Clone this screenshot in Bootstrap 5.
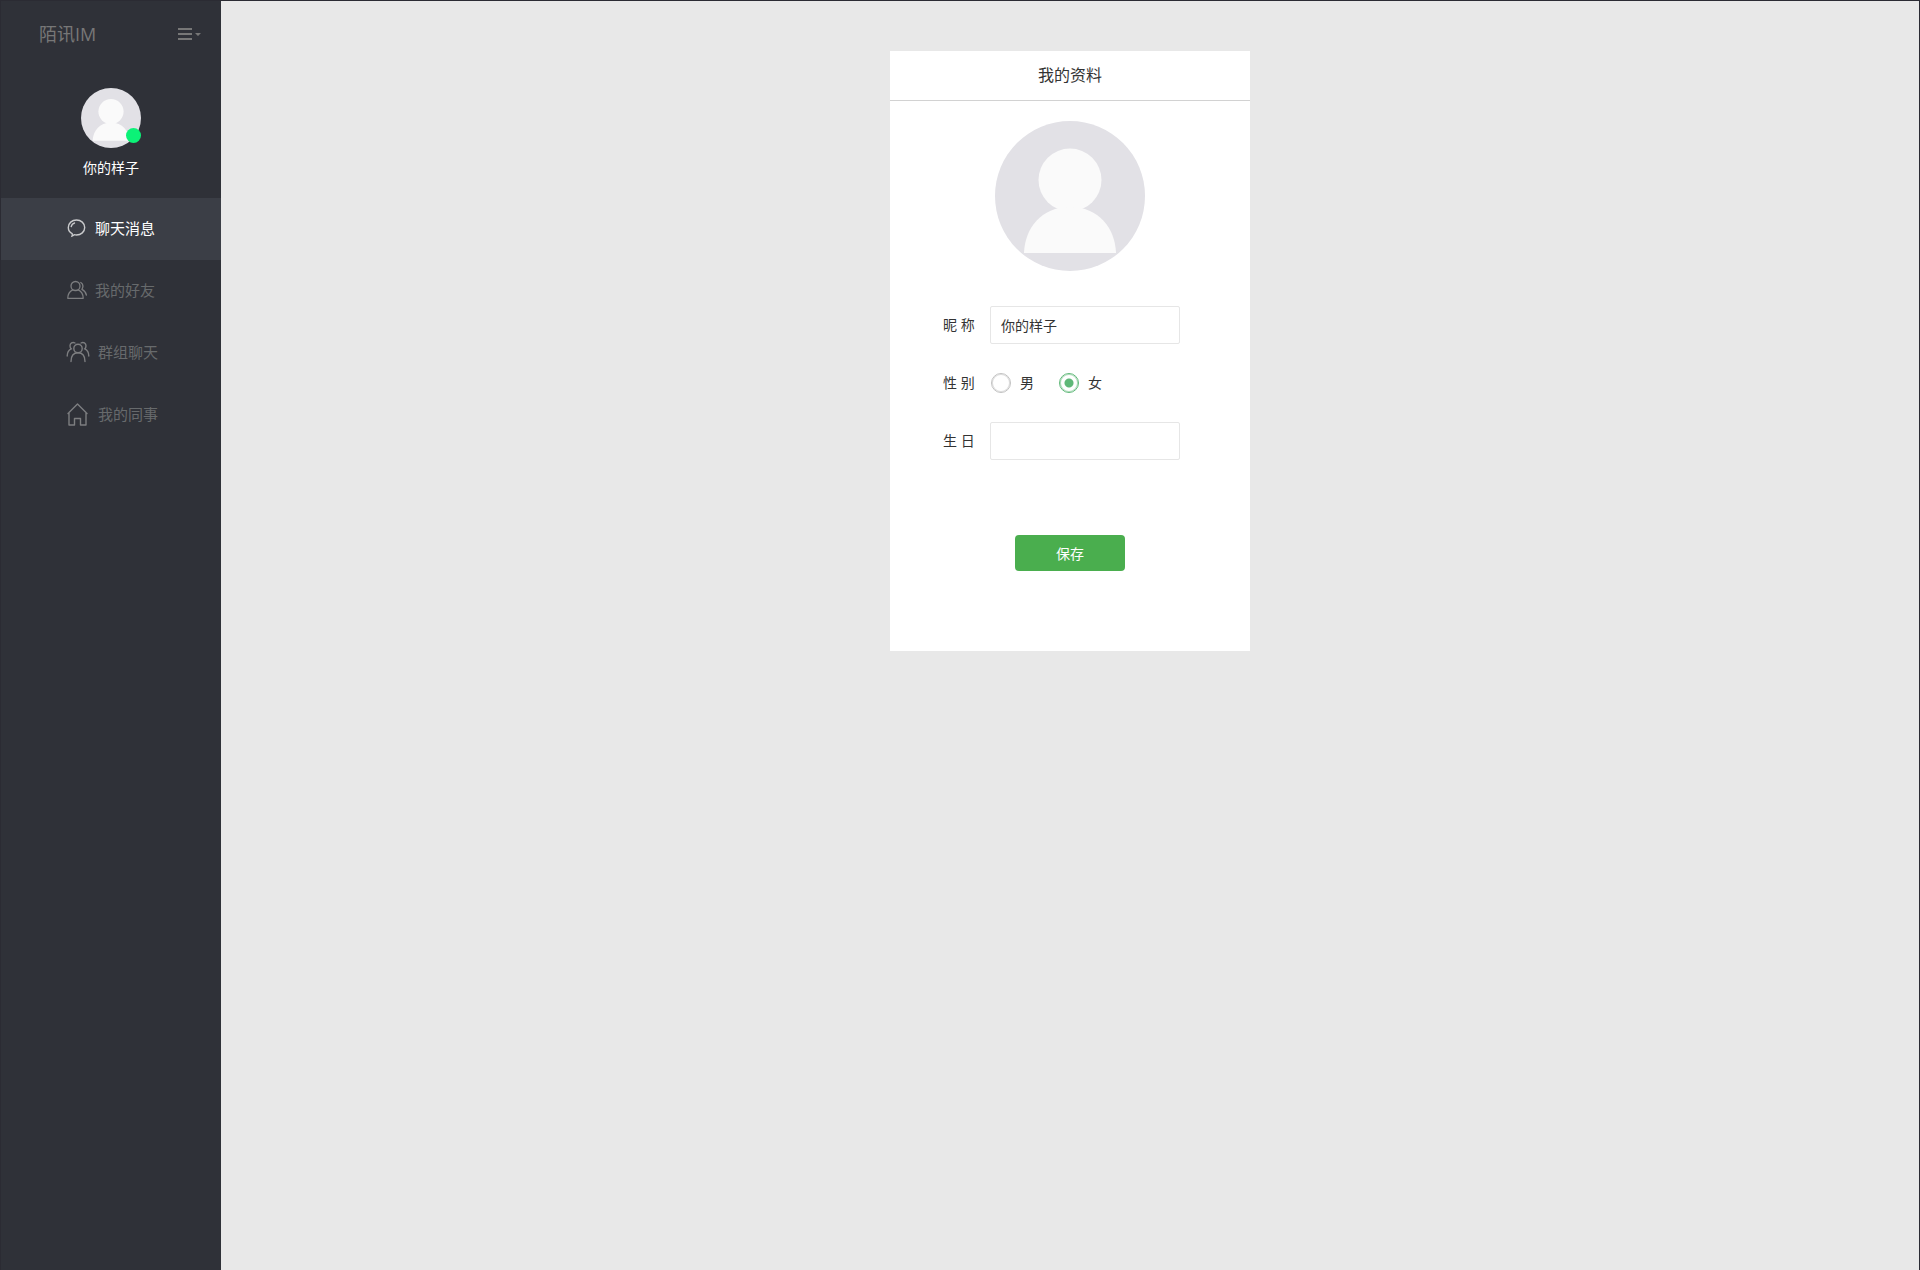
<!DOCTYPE html>
<html lang="zh-CN">
<head>
<meta charset="utf-8">
<meta name="viewport" content="width=device-width, initial-scale=1">
<title>陌讯IM</title>
<link rel="stylesheet" href="https://cdn.jsdelivr.net/npm/bootstrap@5.3.0/dist/css/bootstrap.min.css">
<style>
body { font-family: "Open Sans", "Noto Sans CJK SC", sans-serif; font-size: 14px; line-height: 20px; color: #333; background: #e8e8e8; }
.im-frame { border: 1px solid #2b2b33; border-bottom: 0; }
.im-side { width: 220px; background: #2f3138; }
.im-head { height: 66px; padding: 0 19px 0 38px; }
.im-brand { font-size: 18px; line-height: 24px; color: #777; }
.im-menu { color: #777; }
.im-face { width: 60px; height: 60px; }
.im-online { width: 15px; height: 15px; right: 0; bottom: 5px; background: #0bf277; }
.im-profile { padding: 21px 0 20px; gap: 10px; }
.im-nav .nav-link { height: 62px; gap: 8px; padding: 0 0 2px; font-size: 15px; color: #676a6c; border-radius: 0; }
.im-nav .nav-link svg { color: #7d7e80; }
.im-nav .nav-link.active { background: #3b3e46; color: #fff; }
.im-nav .nav-link.active svg { color: #c9cacc; }
.im-main { padding-top: 50px; }
.im-panel { width: 360px; min-height: 600px; }
.im-title { font-size: 16px; line-height: 24px; padding: 12px 0 13px; border-bottom: 1px solid #d2d2d2; font-weight: 400; color: #333; }
.im-photo { width: 150px; height: 150px; margin: 20px auto 35px; }
.im-form { padding: 0 50px; }
.im-fields { gap: 20px; padding-right: 20px; }
.im-row { min-height: 38px; }
.im-label { width: 50px; padding-left: 3px; white-space: nowrap; }
.im-input { height: 38px; padding: 0 10px; font-size: 14px; color: #333; border-color: #e6e6e6; border-radius: 2px; }
.im-radios { gap: 25px; padding-left: 1px; }
.im-radio { gap: 9px; margin: 0; min-height: 0; padding: 0; }
.im-radio .form-check-input { float: none; width: 20px; height: 20px; margin: 0; border: 1px solid #c2c2c2; box-shadow: inset 0 0 0 1px #ddd; background: #fff; }
.im-radio .form-check-input:checked { border-color: #5fb878; box-shadow: inset 0 0 0 1px #b0dcbc; background: radial-gradient(circle, #5fb878 4px, #fff 5px); }
.im-save { width: 110px; height: 36px; margin-top: 75px; padding: 0; font-size: 14px; background: #4aae4e; color: #fff; border: 0; border-radius: 4px; }
.im-save:hover { background: #409b44; color: #fff; }
</style>
<script src="https://cdn.jsdelivr.net/npm/bootstrap@5.3.0/dist/js/bootstrap.bundle.min.js"></script>
</head>
<body>
<svg width="0" height="0" class="position-absolute" aria-hidden="true">
  <symbol id="person" viewBox="0 0 150 150">
    <circle cx="75" cy="75" r="75" fill="#e2e1e6"/>
    <circle cx="75" cy="59" r="31.5" fill="#fafafa"/>
    <path d="M29 132C30 107 46 86 75 86s45 21 46 46z" fill="#fafafa"/>
  </symbol>
</svg>
<div class="im-frame d-flex min-vh-100">
  <aside class="im-side flex-shrink-0 d-flex flex-column">
    <header class="im-head d-flex align-items-center justify-content-between">
      <a href="#" class="im-brand text-decoration-none">陌讯IM</a>
      <button type="button" class="im-menu btn p-0 border-0 d-flex" aria-label="菜单">
        <svg width="24" height="12" viewBox="0 0 24 12" fill="currentColor"><path d="M0 0h14v2H0zM0 5h14v2H0zM0 10h14v2H0zM17 5h6l-3 3z"/></svg>
      </button>
    </header>
    <div class="im-profile d-flex flex-column align-items-center">
      <div class="im-face position-relative">
        <svg width="60" height="60"><use href="#person"/></svg>
        <span class="im-online position-absolute rounded-circle"></span>
      </div>
      <span class="text-white">你的样子</span>
    </div>
    <nav class="im-nav nav flex-column">
      <a href="#" class="nav-link active d-flex align-items-center justify-content-center">
        <svg width="20" height="20" viewBox="0 0 20 20" fill="none" stroke="currentColor" stroke-width="1.4" stroke-linecap="round"><path d="M5.200 15.700C2.500 14.200 1.300 12 1.300 9.500c0-4.300 3.700-7.500 8.200-7.500s8.200 3.200 8.200 7.500-3.700 7.500-8.200 7.500c-.8 0-1.600-.1-2.300-.3-.5.700-1.200 1.200-2.200 1.500.3-.7.400-1.400.2-2.500z"/><path d="M4.200 8.500C4.600 6.700 5.800 5.500 7.500 5"/></svg>
        聊天消息</a>
      <a href="#" class="nav-link d-flex align-items-center justify-content-center">
        <svg width="20" height="20" viewBox="0 0 20 20" fill="none" stroke="currentColor" stroke-width="1.300" stroke-linecap="round" stroke-linejoin="round"><circle cx="8.500" cy="6" r="4.500"/><path d="M5.800 9.800C2.500 11.200.8 13.600.8 18.300h15.400c0-4.700-1.700-7.100-5-8.500M13.800 2.500c1.800 1.200 2.600 3.300 1.700 5.500l-.6 1.400c2.600 1.200 4 3.100 4.500 5.600"/></svg>
        我的好友</a>
      <a href="#" class="nav-link d-flex align-items-center justify-content-center">
        <svg width="26" height="22" viewBox="0 0 26 22" fill="none" stroke="currentColor" stroke-width="1.400" stroke-linecap="round"><circle cx="14" cy="7.500" r="4.200"/><path d="M7 20.500c0-5.200 2.200-8.800 7-8.800s7 3.600 7 8.800M11 2C8.500.6 6 2.200 6 4.800c0 1.300.4 2.300 1.200 3C4.800 9 3.200 11.500 3.200 15M17 2c2.500-1.400 5 .2 5 2.800 0 1.300-.4 2.300-1.200 3 2.400 1.200 4 3.700 4 7.200"/></svg>
        群组聊天</a>
      <a href="#" class="nav-link d-flex align-items-center justify-content-center">
        <svg width="26" height="24" viewBox="0 0 26 24" fill="none" stroke="currentColor" stroke-width="1.400" stroke-linejoin="round" stroke-linecap="round"><path d="M4 11.500 13.500 2l9.500 9.500M5 10.500v12.500h5.500v-6.500h6V23H22V10.500"/></svg>
        我的同事</a>
    </nav>
  </aside>
  <main class="im-main flex-grow-1">
    <section class="im-panel bg-white mx-auto">
      <h1 class="im-title text-center m-0">我的资料</h1>
      <svg class="im-photo d-block" role="img" aria-label="头像"><use href="#person"/></svg>
      <form class="im-form">
        <div class="im-fields d-flex flex-column">
          <div class="im-row d-flex align-items-center">
            <label for="nick" class="im-label flex-shrink-0">昵 称</label>
            <input id="nick" type="text" class="im-input form-control" value="你的样子">
          </div>
          <div class="im-row d-flex align-items-center" role="radiogroup" aria-labelledby="sex">
            <span id="sex" class="im-label flex-shrink-0">性 别</span>
            <div class="im-radios d-flex">
              <div class="im-radio form-check d-flex align-items-center">
                <input class="form-check-input" type="radio" name="sex" id="male"><label for="male">男</label>
              </div>
              <div class="im-radio form-check d-flex align-items-center">
                <input class="form-check-input" type="radio" name="sex" id="female" checked><label for="female">女</label>
              </div>
            </div>
          </div>
          <div class="im-row d-flex align-items-center">
            <label for="birth" class="im-label flex-shrink-0">生 日</label>
            <input id="birth" type="text" class="im-input form-control">
          </div>
        </div>
        <button type="button" class="im-save btn d-block mx-auto">保存</button>
      </form>
    </section>
  </main>
</div>
</body>
</html>
